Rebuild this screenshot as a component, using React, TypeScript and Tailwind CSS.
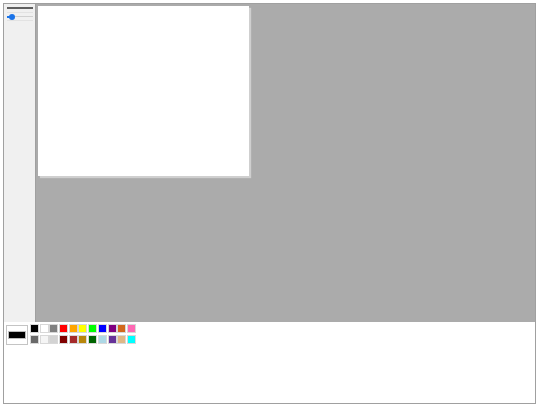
import React from "react";

const row1 = ["#000000", "#ffffff", "#808080", "#ff0000", "#ffa500", "#ffff00", "#00ff00", "#0000ff", "#800080", "#d2691e", "#ff69b4"];
const row2 = ["#696969", "#f5f5f5", "#d3d3d3", "#800000", "#a52a2a", "#b8860b", "#006400", "#add8e6", "#663399", "#deb887", "#00ffff"];

function Swatch({ c }: { c: string }) {
  return (
    <div
      className="w-[9px] h-[9px] border border-[#d8d8d8] box-border"
      style={{ backgroundColor: c }}
    />
  );
}

export default function App() {
  return (
    <div className="w-[540px] h-[405px] bg-white pt-[3px] pl-[3px] font-['Liberation_Sans',sans-serif]">
      <div className="w-[533px] h-[401px] border border-[#a0a0a0] flex flex-col box-border">
        <div className="flex h-[318px]">
          <div className="w-[32px] bg-[#f0f0f0] border-r border-[#a0a0a0] flex flex-col pt-[3px] pl-[3px] pr-[2px] box-border">
            <div className="h-[2px] bg-[#606060] w-[26px]" />
            <div className="mt-[3px] w-[26px] h-[9px] border-y border-[#e2e2e2] relative">
              <div className="absolute left-0 right-0 top-[3px] h-[1px] bg-[#d0d0d0]" />
              <div className="absolute left-0 w-[5px] top-[3px] h-[2px] bg-[#1a73e8]" />
              <div className="absolute left-[2px] top-[1px] w-[6px] h-[6px] rounded-full bg-[#1a73e8]" />
            </div>
          </div>
          <div className="flex-1 bg-[#ababab] pt-[2px] pl-[2px]">
            <div className="w-[211px] h-[170px] bg-white shadow-[2px_2px_1px_#cfcfcf]" />
          </div>
        </div>
        <div className="flex-1 bg-white flex items-start pl-[2px] pt-[2px]">
          <div className="mt-[1px] w-[22px] h-[20px] border border-[#c4c4c4] flex items-center justify-center box-border">
            <div className="w-[18px] h-[8px] bg-black border border-[#bcbcbc] outline outline-1 outline-white" />
          </div>
          <div className="ml-[2px] flex flex-col gap-[2px]">
            <div className="flex gap-[0.7px]">
              {row1.map((c, i) => (
                <Swatch key={i} c={c} />
              ))}
            </div>
            <div className="flex gap-[0.7px]">
              {row2.map((c, i) => (
                <Swatch key={i} c={c} />
              ))}
            </div>
          </div>
        </div>
      </div>
    </div>
  );
}
